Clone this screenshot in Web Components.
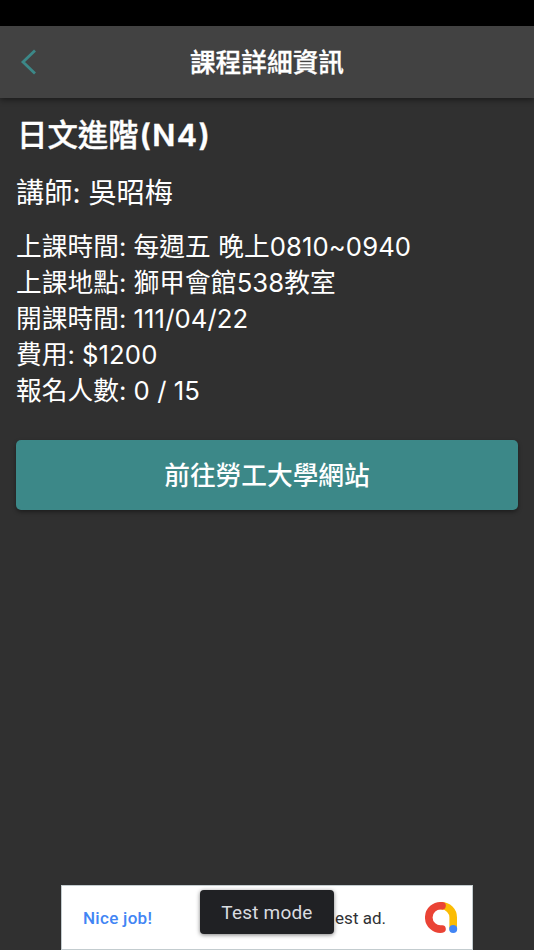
<!DOCTYPE html>
<html lang="zh-Hant">
<head>
<meta charset="utf-8">
<title>課程詳細資訊</title>
<style>
  body {
    margin: 0;
    background: #303030;
    color: #fff;
    font-family: Inter, "Noto Sans CJK TC", sans-serif;
  }

  .level {
    margin-left: 1px;
    font-weight: 600;
    letter-spacing: 1.4px;
  }
</style>
</head>
<body>
<course-page>
  <app-header slot="header">課程詳細資訊</app-header>
  <course-details>
    <span slot="name">日文進階<span class="level">(N4)</span></span>
    <span slot="teacher">講師: 吳昭梅</span>
    <info-row label="上課時間:">每週五 晚上0810~0940</info-row>
    <info-row label="上課地點:">獅甲會館538教室</info-row>
    <info-row label="開課時間:">111/04/22</info-row>
    <info-row label="費用:">$1200</info-row>
    <info-row label="報名人數:">0 / 15</info-row>
  </course-details>
  <link-button>前往勞工大學網站</link-button>
  <ad-banner slot="footer">
    <span slot="headline">Nice job!</span>
    <span slot="text">est ad.</span>
    <span slot="badge">Test mode</span>
  </ad-banner>
</course-page>

<script>
/**
 * Attaches an open shadow root filled with the given markup.
 */
const render = (element, markup) => {
  const template = document.createElement('template')
  template.innerHTML = markup
  element.attachShadow({ mode: 'open' })
    .appendChild(template.content.cloneNode(true))
}

customElements.define('course-page',
  class extends HTMLElement {
    constructor () {
      super()
      render(this, `
<style>
  :host {
    display: flex;
    flex-direction: column;
    height: 950px;
    overflow: hidden;
  }

  .statusbar {
    flex: none;
    height: 26px;
    background: #000;
  }

  main {
    flex: 1;
    padding: 16px 16px 0;
  }
</style>
<div class="statusbar"></div>
<slot name="header"></slot>
<main><slot></slot></main>
<slot name="footer"></slot>
`)
    }
  })

customElements.define('app-header',
  class extends HTMLElement {
    constructor () {
      super()
      render(this, `
<style>
  :host {
    display: grid;
    grid-template-columns: 58px 1fr 58px;
    align-items: center;
    flex: none;
    height: 72px;
    background: #424242;
    box-shadow: 0 2px 6px rgba(0, 0, 0, .45);
  }

  svg {
    display: block;
    margin-left: 20px;
  }

  h1 {
    margin: 0;
    padding-top: 2px;
    text-align: center;
    font-size: 25.7px;
    font-weight: 500;
    line-height: 36px;
    -webkit-text-stroke: .3px #fff;
  }
</style>
<svg width="18" height="26" viewBox="0 0 18 26" fill="none" stroke="#3c8888" stroke-width="2.8">
  <path d="M15 1.5L3 13L15 24.5"/>
</svg>
<h1><slot></slot></h1>
`)
    }
  })

customElements.define('course-details',
  class extends HTMLElement {
    constructor () {
      super()
      render(this, `
<style>
  :host {
    display: block;
  }

  h2 {
    margin: 0 0 17px 1px;
    font-size: 30.4px;
    font-weight: 500;
    line-height: 42px;
    -webkit-text-stroke: .4px #fff;
  }

  h3 {
    margin: 0 0 16px;
    font-size: 28.2px;
    font-weight: 400;
    line-height: 40px;
  }
</style>
<h2><slot name="name"></slot></h2>
<h3><slot name="teacher"></slot></h3>
<slot></slot>
`)
    }
  })

customElements.define('info-row',
  class extends HTMLElement {
    constructor () {
      super()
      render(this, `
<style>
  :host {
    display: flex;
    gap: 7px;
    font-size: 25.7px;
    letter-spacing: .08px;
    line-height: 36px;
    white-space: nowrap;
  }
</style>
<span class="label"></span>
<span><slot></slot></span>
`)
      this.shadowRoot.querySelector('.label').textContent = this.getAttribute('label')
    }
  })

customElements.define('link-button',
  class extends HTMLElement {
    constructor () {
      super()
      render(this, `
<style>
  :host {
    display: block;
    margin-top: 31px;
  }

  button {
    display: block;
    width: 100%;
    height: 70px;
    padding: 2px 0 0;
    border: none;
    border-radius: 5px;
    background: #3c8888;
    color: #fff;
    font: 500 25.7px/36px Inter, "Noto Sans CJK TC", sans-serif;
    box-shadow: 0 2px 4px rgba(0, 0, 0, .4);
  }
</style>
<button type="button"><slot></slot></button>
`)
    }
  })

customElements.define('ad-banner',
  class extends HTMLElement {
    constructor () {
      super()
      render(this, `
<style>
  :host {
    position: relative;
    display: flex;
    align-items: center;
    align-self: center;
    flex: none;
    box-sizing: border-box;
    width: 412px;
    height: 65px;
    padding: 0 14px 0 21px;
    border: 1px solid #c3cccf;
    background: #fff;
    color: #303134;
    font-family: Roboto, Inter, sans-serif;
    font-size: 17px;
  }

  .headline {
    color: #4285f4;
    font-weight: 500;
    letter-spacing: .3px;
  }

  .text {
    margin-left: auto;
    margin-right: 39px;
  }

  .badge {
    position: absolute;
    left: 138px;
    top: 4px;
    width: 134px;
    height: 44px;
    border-radius: 4px;
    background: #202124;
    color: #dadce0;
    font-size: 19px;
    letter-spacing: .2px;
    line-height: 45px;
    text-align: center;
    box-shadow: 0 1px 4px rgba(0, 0, 0, .5);
  }
</style>
<span class="headline"><slot name="headline"></slot></span>
<span class="text"><slot name="text"></slot></span>
<svg width="33" height="33" viewBox="0 0 33 33" fill="none" stroke-width="7.6" stroke-linecap="round">
  <path d="M16.5 4.8A11.7 11.7 0 0 1 28.2 16.5V27" stroke="#fbbc04"/>
  <path d="M17 4.8A11.7 11.7 0 1 0 17 28" stroke="#ea4335"/>
  <circle cx="28.2" cy="28" r="4" fill="#4285f4"/>
</svg>
<div class="badge"><slot name="badge"></slot></div>
`)
    }
  })
</script>
</body>
</html>
